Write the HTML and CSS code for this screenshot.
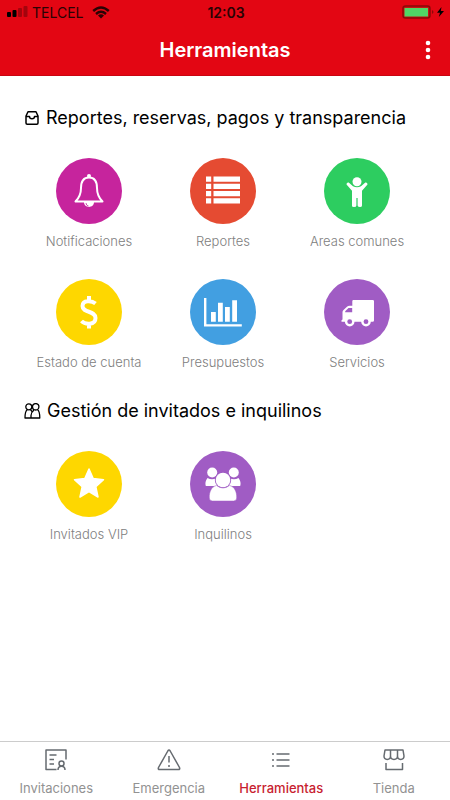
FILE: index.html
```html
<!DOCTYPE html>
<html lang="es">
<head>
<meta charset="utf-8">
<meta name="viewport" content="width=device-width, initial-scale=1">
<title>Herramientas</title>
<link rel="stylesheet" href="styles.css">
</head>
<body>
<header class="header">
  <div class="status">
    <div class="carrier">
      <svg width="21" height="12" viewBox="0 0 21 12" aria-hidden="true"><rect x="0" y="6" width="4" height="5" rx="1"/><rect x="5.500" y="4" width="4" height="7" rx="1"/><g opacity=".28"><rect x="11" y="2" width="4" height="9" rx="1"/><rect x="16.500" y="0" width="4" height="11" rx="1"/></g></svg>
      <span>TELCEL</span>
      <svg class="wifi" width="18" height="13" viewBox="0 0 18 13" fill="none" stroke="currentColor" stroke-width="2.400" aria-hidden="true"><path d="M1.200 5Q9-2 16.800 5M4 8Q9 3.700 14 8"/><path d="M6 9.500Q9 7.200 12 9.500L9 12.500Z" fill="currentColor" stroke="none"/></svg>
    </div>
    <time class="clock">12:03</time>
    <div class="power">
      <svg width="43" height="14" viewBox="0 0 43 14" aria-hidden="true"><rect x="1" y="1" width="27" height="12" rx="2.500" fill="#c41414" stroke="#8d0907" stroke-width="1.500"/><rect x="2.500" y="3" width="23.500" height="8.500" fill="#50d765"/><path d="M30 5q3 2 0 4z" fill="#8d0907"/><path d="M39.500 2L35 7.700h3L36.800 12 42 6h-3.200z"/></svg>
    </div>
  </div>
  <div class="titlebar">
    <h1>Herramientas</h1>
    <button class="more" type="button" aria-label="Más opciones"><svg width="6" height="20" viewBox="0 0 6 20" fill="currentColor"><circle cx="3" cy="3" r="2.300"/><circle cx="3" cy="10" r="2.300"/><circle cx="3" cy="17" r="2.300"/></svg></button>
  </div>
</header>

<main class="content">
  <section class="group">
    <h2><svg width="16" height="16" viewBox="0 0 16 16" fill="none" stroke="currentColor" stroke-width="1.500" stroke-linejoin="round" aria-hidden="true"><path d="M2 6L4 1.700h8L14 6v7q0 1.200-1.200 1.200H3.200q-1.200 0-1.200-1.200zM2 6.500H5.500q0 2.300 2.500 2.300t2.500-2.300H14"/></svg>Reportes, reservas, pagos y transparencia</h2>
    <div class="tiles">
      <a class="tile" href="#notificaciones">
        <svg class="disc magenta" viewBox="0 0 66 66" aria-hidden="true"><path d="M33 19.500C26 19.500 25 25 25 30C25 37 23 40 19.500 43.500H46.500C43 40 41 37 41 30C41 25 40 19.500 33 19.500Z" fill="none" stroke="#fff" stroke-width="2" stroke-linejoin="round"/><circle cx="33" cy="18" r="2"/><path d="M28 44h10c0 6.500-10 6.500-10 0z"/><path d="M30 45q0 2.500 2.500 3" fill="none" stroke="#c6249d" stroke-width=".8"/></svg>
        <span>Notificaciones</span></a>
      <a class="tile" href="#reportes">
        <svg class="disc orange" viewBox="0 0 66 66" aria-hidden="true"><path d="M16 18.500h5.200v5.200H16zM23.500 18.500H50v5.200H23.500zM16 25.800h5.200V31H16zM23.500 25.800H50V31H23.500zM16 33h5.200v5.200H16zM23.500 33H50v5.200H23.500zM16 40.200h5.200v5.200H16zM23.500 40.200H50v5.200H23.500z"/></svg>
        <span>Reportes</span></a>
      <a class="tile" href="#areas">
        <svg class="disc green" viewBox="0 0 66 66" aria-hidden="true"><circle cx="33" cy="23.700" r="4.500"/><path d="M24.700 24.500L29 28.200Q33 30.200 37 28.200L41.300 24.500Q43.600 24.200 43.500 26.500L38 32.800V47.500Q38 49 36 49T33.600 47.500V40H32.400V47.500Q32.400 49 30 49T28 47.500V32.800L22.500 26.500Q22.400 24.200 24.700 24.500Z"/></svg>
        <span>Areas comunes</span></a>
      <a class="tile" href="#cuenta">
        <svg class="disc yellow" viewBox="0 0 66 66" aria-hidden="true"><path d="M39.500 24.500C36 21.500 26.500 20.500 26.500 27C26.500 34.500 39.500 31 39.500 39C39.500 46.500 29 45.800 25.500 42M33 17v5M33 45v4.500" fill="none" stroke="#fff" stroke-width="4"/></svg>
        <span>Estado de cuenta</span></a>
      <a class="tile" href="#presupuestos">
        <svg class="disc blue" viewBox="0 0 66 66" aria-hidden="true"><path d="M14 19h2.400v26.200h35.400v2.400H14zM21 33h4.800v9.700H21zM28 23.700h4.800v19H28zM35 28h4.800v14.700H35zM42.200 21.300H47v21.400h-4.800z"/></svg>
        <span>Presupuestos</span></a>
      <a class="tile" href="#servicios">
        <svg class="disc purple" viewBox="0 0 66 66" aria-hidden="true"><path d="M29.500 21H48.800Q50 21 50 22.200V41.500Q50 42.800 48.500 42.800H17.500V41.300L18.500 40.500V33Q18.500 32 19.500 31L23 27.700Q24 26.700 25.500 26.700H28.300V22.200Q28.300 21 29.500 21Z"/><path class="cut" d="M21.200 33.300v-1l3.300-3.200h3.700v4.200z"/><circle cx="25.700" cy="42.700" r="4.800"/><circle cx="42" cy="42.700" r="4.800"/><g class="cut"><circle cx="25.700" cy="42.700" r="2.400"/><circle cx="42" cy="42.700" r="2.400"/></g></svg>
        <span>Servicios</span></a>
    </div>
  </section>

  <section class="group">
    <h2><svg width="17" height="16" viewBox="0 0 17 16" fill="none" stroke="currentColor" stroke-width="1.300" stroke-linejoin="round" aria-hidden="true"><circle cx="4.800" cy="3.800" r="3"/><circle cx="11.700" cy="3.800" r="3.200"/><path d="M3.300 6.700C1 8 1 11 1 15H7V12.500C7 9.500 8.500 8.300 10 7.100M6.500 6.700L8.400 9M13.500 6.700C15.800 8 15.800 11 15.800 15H7"/></svg>Gestión de invitados e inquilinos</h2>
    <div class="tiles">
      <a class="tile" href="#vip">
        <svg class="disc yellow" viewBox="0 0 66 66" aria-hidden="true"><path d="M33 18L37.200 27.600 47.500 28.700 39.800 35.700 42 46 33 40.700 24 46 26.200 35.700 18.500 28.700 28.800 27.600Z" stroke="#fff" stroke-width="1.500" stroke-linejoin="round"/></svg>
        <span>Invitados VIP</span></a>
      <a class="tile" href="#inquilinos">
        <svg class="disc purple" viewBox="0 0 66 66" aria-hidden="true"><circle cx="22.200" cy="21.500" r="5"/><circle cx="43.800" cy="21.500" r="5"/><path d="M17.500 27Q22 29.500 26.500 27L29 35H15.800Q14.500 31 17.500 27zM48.500 27Q44 29.500 39.500 27L37 35H50.200Q51.500 31 48.500 27z"/><circle class="cut" cx="33" cy="29" r="8.200"/><circle cx="33" cy="29" r="7.300"/><path d="M26.500 34.500Q33 39.500 39.500 34.500C44.500 35.500 47 41 46.700 47Q46.600 50 43.500 50H22.500Q19.400 50 19.300 47C19 41 21.500 35.500 26.500 34.500Z" stroke="#a05cc4" stroke-width=".5"/></svg>
        <span>Inquilinos</span></a>
    </div>
  </section>
</main>

<nav class="tabs" aria-label="Principal">
  <a class="tab" href="#invitaciones"><svg width="24" height="24" viewBox="0 0 24 24" aria-hidden="true"><path d="M12.500 21.500H2V2H22V11.500M5.500 7h7M5.500 11.500h4.500M5.500 16h4.500"/><circle cx="17.500" cy="15.500" r="2.500"/><path d="M14 22c0-5 7-5 7 0"/></svg><span>Invitaciones</span></a>
  <a class="tab" href="#emergencia"><svg width="24" height="24" viewBox="0 0 24 24" aria-hidden="true"><path d="M10.800 3Q12 1 13.200 3L22.500 19.500Q23.300 21.500 21.300 21.500H2.700Q.7 21.500 1.500 19.500ZM12 8v6.500M12 17v2"/></svg><span>Emergencia</span></a>
  <a class="tab active" href="#herramientas" aria-current="page"><svg width="24" height="24" viewBox="0 0 24 24" aria-hidden="true"><path d="M7.500 6H20.500M7.500 12H20.500M7.500 18H20.500M3 6h2M3 12h2M3 18h2"/></svg><span>Herramientas</span></a>
  <a class="tab" href="#tienda"><svg width="24" height="24" viewBox="0 0 24 24" aria-hidden="true"><path d="M3 2H21L22 8C22 12.500 15.500 12.500 15.500 8C15.500 12.500 8.500 12.500 8.500 8C8.500 12.500 2 12.500 2 8ZM8.500 2v6M15.500 2v6M4 15v6.500H20.500V15"/></svg><span>Tienda</span></a>
</nav>
</body>
</html>
```

FILE: styles.css
```css
* { box-sizing: border-box; }

body {
  margin: 0;
  min-height: 100vh;
  display: flex;
  flex-direction: column;
  background: #fff;
  color: #000;
  font-family: Inter, "Liberation Sans", sans-serif;
}

h1, h2 { margin: 0; }
a { color: inherit; text-decoration: none; }
svg { display: block; flex: none; }

.header {
  background: #e30613;
  border-bottom: 1px solid #c90511;
}

.status {
  display: grid;
  grid-template-columns: 1fr auto 1fr;
  align-items: center;
  height: 24px;
  padding: 0 5px 0 7px;
  color: #2a0304;
  font-size: 14px;
}

.carrier { display: flex; align-items: center; gap: 4px; }
.wifi { margin-left: 4px; }
.clock { font-weight: 600; }
.power { display: flex; justify-content: flex-end; }

.titlebar {
  display: grid;
  grid-template-columns: 1fr auto 1fr;
  align-items: center;
  height: 51px;
  padding: 0 13px;
  color: #fff;
}

.titlebar h1 {
  grid-column: 2;
  font-size: 20px;
  font-weight: 600;
  line-height: 24px;
}

.more {
  justify-self: end;
  padding: 6px;
  border: 0;
  background: none;
  color: inherit;
}

.content { flex: 1; padding: 30px 26px 24px 22px; }
.group { padding-bottom: 27px; }

.group h2 {
  display: flex;
  align-items: center;
  gap: 6px;
  padding-left: 2px;
  font-size: 18px;
  font-weight: 400;
  line-height: 24px;
}

.tiles {
  display: grid;
  grid-template-columns: repeat(3, 1fr);
  row-gap: 28px;
  padding-top: 28px;
}

.tile {
  display: flex;
  flex-direction: column;
  align-items: center;
  gap: 8px;
  color: #808080;
  font-size: 13px;
  font-weight: 300;
  line-height: 19px;
}

.disc { width: 66px; height: 66px; border-radius: 50%; fill: #fff; }
.magenta { background: #c6249d; }
.orange { background: #e54b32; }
.green { background: #2dcd60; }
.yellow { background: #fed700; }
.blue { background: #429fe1; }
.purple { background: #a05cc4; }
.cut { fill: #a05cc4; }

.tabs {
  display: grid;
  grid-template-columns: repeat(4, 1fr);
  border-top: 1px solid #ccc;
}

.tab {
  display: flex;
  flex-direction: column;
  align-items: center;
  gap: 8px;
  padding: 6px 0 3px;
  color: #929292;
  font-size: 13px;
  line-height: 17px;
}

.tab svg {
  fill: none;
  stroke: #666b70;
  stroke-width: 1.5;
  stroke-linejoin: round;
}

.tab.active { color: #c81e30; font-weight: 500; }
```
